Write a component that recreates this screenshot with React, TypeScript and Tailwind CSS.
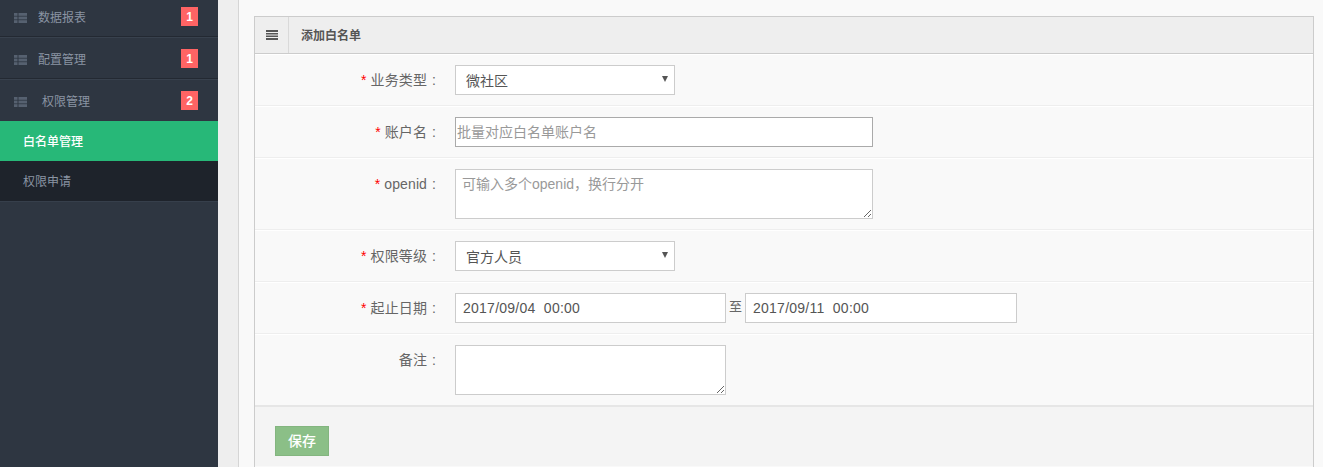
const font = "font-['Liberation_Sans','Noto_Sans_CJK_SC',sans-serif]";

function ListIcon() {
  return (
    <svg width="13" height="10" viewBox="0 0 13 10" className="shrink-0 mt-[2px]" fill="#566170">
      <rect x="0" y="0" width="3.5" height="2.8" />
      <rect x="4.5" y="0" width="8.5" height="2.8" />
      <rect x="0" y="3.6" width="3.5" height="2.8" />
      <rect x="4.5" y="3.6" width="8.5" height="2.8" />
      <rect x="0" y="7.2" width="3.5" height="2.8" />
      <rect x="4.5" y="7.2" width="8.5" height="2.8" />
    </svg>
  );
}

function NavItem({ label, count, indent, last }: { label: string; count: string; indent?: boolean; last?: boolean }) {
  return (
    <div className={(last ? "h-[41px]" : "h-[42px] border-b border-b-[#38414d] shadow-[inset_0_-1px_0_#232932]") + " flex items-center pl-[14px] pr-[20px]"}>
      <ListIcon />
      <span className={(indent ? "ml-[15px]" : "ml-[11px]") + " text-[12px] text-[#8a94a3] pt-[3px]"}>{label}</span>
      <span className="ml-auto w-[17px] h-[19px] bg-[#ff6464] text-white text-[12px] font-bold flex items-center justify-center">{count}</span>
    </div>
  );
}

function Row({ label, required, className, children }: { label: string; required?: boolean; className: string; children: React.ReactNode }) {
  return (
    <div className={"flex border-t border-t-white border-b pt-[10px] " + className}>
      <label className="w-[184px] shrink-0 text-right text-[14px] tracking-[0.1px] leading-[30px] text-[#666] h-[30px]">
        {required && <span className="text-[#f00] mr-[4px]">*</span>}
        {label}
        <span className="ml-[5px] mr-[3px]">:</span>
      </label>
      <div className="ml-[16px] flex items-start">{children}</div>
    </div>
  );
}

function Select({ value }: { value: string }) {
  return (
    <div className="relative w-[220px] h-[30px]">
      <select defaultValue={value} className="w-full h-full appearance-none bg-white border border-[#ccc] pl-[10px] pt-[2px] text-[14px] text-[#555] outline-none">
        <option>{value}</option>
      </select>
      <svg width="6" height="6" viewBox="0 0 6 6" className="absolute right-[7px] top-[11px]" fill="#555">
        <path d="M0 0h6L3 6z" />
      </svg>
    </div>
  );
}

export default function App() {
  return (
    <div className={font + " flex w-[1323px] h-[467px] overflow-hidden bg-[#f9f9f9]"}>
      <aside className="w-[218px] shrink-0 bg-[#2e3641] h-full">
        <div className="-mt-[4px]">
          <NavItem label="数据报表" count="1" />
          <NavItem label="配置管理" count="1" />
          <NavItem label="权限管理" count="2" indent last />
        </div>
        <div className="h-[40px] bg-[#27b878] flex items-center pl-[23px] pt-[2px] text-[12px] font-medium text-white">白名单管理</div>
        <div className="h-[41px] bg-[#1e232b] flex items-center pl-[23px] pt-[2px] text-[12px] text-[#8a94a3] border-b border-b-[#363f4b]">权限申请</div>
      </aside>
      <div className="w-[21px] shrink-0 bg-[#eeeeee] border-r border-r-[#d5d5d5]" />
      <main className="flex-1 pl-[15px] pr-[9px] pt-[16px]">
        <section className="border border-[#ccc] bg-[#f9f9f9] h-[470px]">
          <header className="flex h-[37px] bg-[#eeeeee] border-b border-b-[#ccc]">
            <div className="w-[34px] border-r border-r-[#d9d9d9] flex items-center justify-center">
              <svg width="12" height="10" viewBox="0 0 12 10" fill="#555">
                <rect y="0" width="12" height="2" />
                <rect y="3" width="12" height="1.5" />
                <rect y="5.5" width="12" height="1.5" />
                <rect y="8" width="12" height="2" />
              </svg>
            </div>
            <h2 className="pl-[12px] text-[12px] font-bold leading-[38px] text-[#555]">添加白名单</h2>
          </header>
          <Row label="业务类型" required className="h-[52px] border-b-[#eeeeee]">
            <Select value="微社区" />
          </Row>
          <Row label="账户名" required className="h-[52px] border-b-[#eeeeee]">
            <input placeholder="批量对应白名单账户名" className="w-[418px] h-[30px] bg-white border border-[#aaa] px-[1px] text-[14px] outline-none placeholder:text-[#999]" />
          </Row>
          <Row label="openid" required className="h-[72px] border-b-[#eeeeee]">
            <textarea placeholder="可输入多个openid，换行分开" className="w-[418px] h-[50px] bg-white border border-[#ccc] px-[6px] py-[4px] text-[14px] leading-[20px] outline-none placeholder:text-[#999] resize-y" />
          </Row>
          <Row label="权限等级" required className="h-[52px] border-b-[#eeeeee]">
            <Select value="官方人员" />
          </Row>
          <Row label="起止日期" required className="h-[52px] border-b-[#eeeeee]">
            <input defaultValue="2017/09/04  00:00" className="w-[271px] h-[30px] bg-white border border-[#ccc] px-[7px] text-[14px] tracking-[0.25px] text-[#555] outline-none" />
            <span className="w-[19px] text-center text-[13px] leading-[28px] text-[#666]">至</span>
            <input defaultValue="2017/09/11  00:00" className="w-[272px] h-[30px] bg-white border border-[#ccc] px-[7px] text-[14px] tracking-[0.25px] text-[#555] outline-none" />
          </Row>
          <Row label="备注" className="h-[72px] border-b-[#e6e6e6]">
            <textarea className="w-[271px] h-[50px] bg-white border border-[#ccc] outline-none resize-y" />
          </Row>
          <footer className="bg-[#f4f4f4] border-t border-t-[#e6e6e6] h-[60px] pl-[20px] pt-[19px]">
            <button className="w-[54px] h-[30px] bg-[#8bbf87] border border-[#83b57f] text-white text-[14px] font-medium">保存</button>
          </footer>
        </section>
      </main>
    </div>
  );
}
